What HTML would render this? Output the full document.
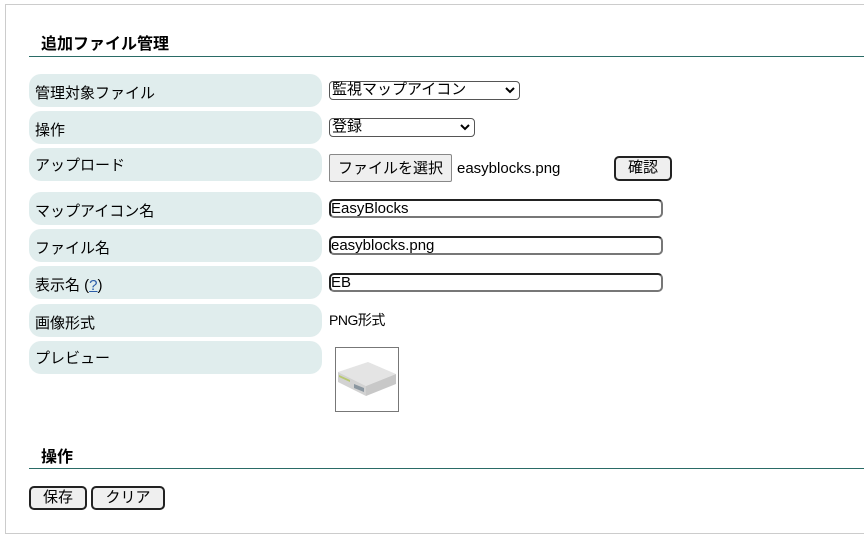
<!DOCTYPE html>
<html><head><meta charset="utf-8"><style>
*{box-sizing:border-box;margin:0;padding:0}
body{width:864px;height:539px;background:#fff;font-family:"Liberation Sans","Noto Sans CJK JP",sans-serif;font-size:15px;color:#000;position:relative;overflow:hidden}
.box{position:absolute;left:5px;top:4px;width:870px;height:530px;border:1px solid #ccc}
.a{position:absolute}
h2{position:absolute;font-size:16px;font-weight:bold;left:41px}
.line{position:absolute;left:29px;width:840px;height:1px;background:#2a6b66}
.pill{position:absolute;left:29px;width:293px;height:33px;background:#e0eded;border-radius:12px;padding:7px 0 0 6px;font-size:15px}
.sel{position:absolute;left:329px;height:19px;border:1px solid #555;border-radius:4px;background:#fff;font-size:15px;line-height:16px;padding-left:2px}
.sel svg{position:absolute;right:4px;top:5px}
.inp{position:absolute;left:329px;width:334px;height:19px;border:2px solid #222;border-bottom-color:#777;border-right-color:#777;border-radius:5px;font-size:15px;line-height:15px}
.btn{position:absolute;background:#efefef;border:2px solid #222;border-radius:5px;font-size:15px;text-align:center;line-height:19px}
</style></head><body>
<div class="box"></div>
<h2 style="top:30px">追加ファイル管理</h2>
<div class="line" style="top:56px"></div>
<div class="pill" style="top:74px;padding-top:8px">管理対象ファイル</div>
<div class="pill" style="top:111px;padding-top:8px">操作</div>
<div class="pill" style="top:148px;padding-top:6px">アップロード</div>
<div class="pill" style="top:192px;padding-top:8px">マップアイコン名</div>
<div class="pill" style="top:229px;padding-top:8px">ファイル名</div>
<div class="pill" style="top:266px;padding-top:8px">表示名 (<span style="color:#2a5ca8;text-decoration:underline">?</span>)</div>
<div class="pill" style="top:304px;padding-top:8px">画像形式</div>
<div class="pill" style="top:341px;padding-top:6px">プレビュー</div>

<div class="sel" style="top:81px;width:191px">監視マップアイコン<svg width="10" height="7"><path d="M1 1L5 5L9 1" stroke="#000" stroke-width="2" fill="none"/></svg></div>
<div class="sel" style="top:118px;width:146px">登録<svg width="10" height="7"><path d="M1 1L5 5L9 1" stroke="#000" stroke-width="2" fill="none"/></svg></div>
<div class="a" style="left:329px;top:154px;width:123px;height:28px;background:#efefef;border:1px solid #888;border-radius:2px;text-align:center;line-height:27px">ファイルを選択</div>
<div class="a" style="left:457px;top:160px">easyblocks.png</div>
<div class="btn" style="left:614px;top:156px;width:58px;height:25px">確認</div>
<div class="inp" style="top:199px">EasyBlocks</div>
<div class="inp" style="top:236px">easyblocks.png</div>
<div class="inp" style="top:273px">EB</div>
<div class="a" style="left:329px;top:310px;font-size:14px;letter-spacing:-0.5px">PNG形式</div>
<div class="a" style="left:335px;top:347px;width:64px;height:65px;border:1px solid #777">
<svg width="62" height="63"><polygon points="2,24 32,14 60,26 30,38" fill="#e4e4e4"/><polygon points="2,24 30,38 30,48 2,34" fill="#d2d2d2"/><polygon points="30,38 60,26 60,36 30,48" fill="#c8c8c8"/><polygon points="3,27 14,32 14,34 3,29" fill="#b8c870"/><polygon points="18,36 28,40 28,44 18,40" fill="#8a96a0"/></svg></div>
<h2 style="top:443px">操作</h2>
<div class="line" style="top:468px"></div>
<div class="btn" style="left:29px;top:486px;width:58px;height:24px">保存</div>
<div class="btn" style="left:91px;top:486px;width:74px;height:24px">クリア</div>
</body></html>
